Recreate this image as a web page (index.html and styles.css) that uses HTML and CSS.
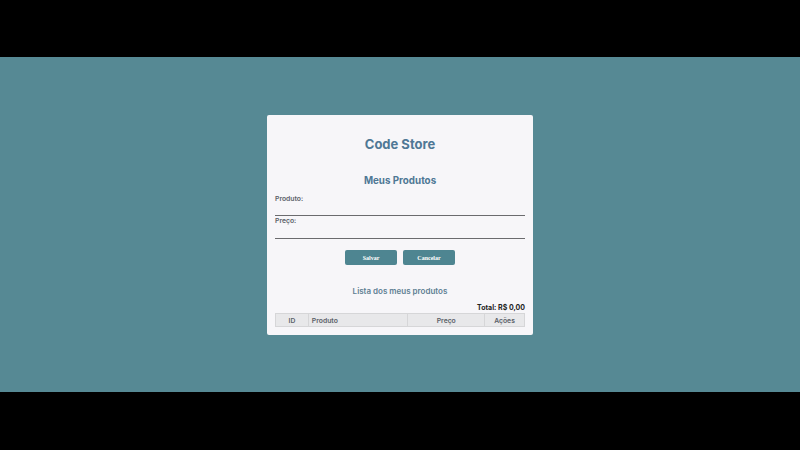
FILE: index.html
```html
<!DOCTYPE html>
<html lang="pt-BR">
<head>
<meta charset="utf-8">
<title>Code Store</title>
<link rel="stylesheet" href="styles.css">
</head>
<body>
<div class="stage">
  <main class="card">
    <h1 class="title">Code Store</h1>
    <h2 class="subtitle">Meus Produtos</h2>
    <form class="form">
      <label class="field">
        <span class="label">Produto:</span>
        <span class="input"></span>
      </label>
      <label class="field">
        <span class="label">Preço:</span>
        <span class="input"></span>
      </label>
      <div class="actions">
        <button type="button" class="btn">Salvar</button>
        <button type="button" class="btn">Cancelar</button>
      </div>
    </form>
    <h3 class="list-title">Lista dos meus produtos</h3>
    <div class="total">Total: R$ 0,00</div>
    <table class="table">
      <thead>
        <tr>
          <th class="c-id">ID</th>
          <th class="c-prod">Produto</th>
          <th class="c-price">Preço</th>
          <th class="c-act">Ações</th>
        </tr>
      </thead>
    </table>
  </main>
</div>
</body>
</html>
```
FILE: styles.css
```css
* { box-sizing: border-box; }
html, body {
  margin: 0;
  padding: 0;
  background: #000;
  height: 450px;
  overflow: hidden;
  font-family: Inter, "Liberation Sans", sans-serif;
}
.stage {
  margin-top: 57px;
  height: 335px;
  background: #568994;
  display: flex;
  justify-content: center;
  align-items: flex-start;
  padding-top: 58px;
}
.card {
  width: 266px;
  height: 220px;
  background: #f7f6f9;
  border-radius: 2px;
  padding: 0 8px 0 8px;
  display: flex;
  flex-direction: column;
}
.title {
  margin: 20px 0 0;
  text-align: center;
  font-size: 13px;
  font-weight: 700;
  color: #4f7895;
  line-height: 18px;
}
.subtitle {
  margin: 21px 0 0;
  text-align: center;
  font-size: 9.8px;
  font-weight: 700;
  color: #4f7895;
  line-height: 14px;
}
.form { display: flex; flex-direction: column; }
.field { display: flex; flex-direction: column; }
.label {
  font-size: 6.8px;
  font-weight: 600;
  color: #5a6068;
  line-height: 9px;
}
.form .field:first-child .label { margin-top: 6px; }
.input {
  display: block;
  height: 13px;
  border-bottom: 1px solid #6b6b6e;
}
.form .field + .field .label { margin-top: 0; }
.form .field + .field .input { height: 14px; }
.actions {
  display: flex;
  justify-content: center;
  gap: 6px;
  margin-top: 11px;
}
.btn {
  width: 52px;
  height: 15px;
  border: none;
  border-radius: 2px;
  background: #4e8591;
  color: #fff;
  font-family: "Liberation Serif", serif;
  font-size: 6px;
  font-weight: 700;
  padding: 0;
}
.list-title {
  margin: 20px 0 0;
  text-align: center;
  font-size: 8px;
  font-weight: 600;
  color: #5e7f93;
  line-height: 12px;
}
.total {
  margin-top: 6px;
  text-align: right;
  font-size: 7px;
  font-weight: 700;
  color: #222;
  line-height: 10px;
}
.table {
  width: 250px;
  border-collapse: collapse;
  margin-top: 0;
}
.table th {
  background: #e8e8ea;
  border: 1px solid #d6d6d8;
  height: 13px;
  padding: 0 3px;
  font-size: 6.8px;
  font-weight: 600;
  color: #5a6068;
}
.c-id { width: 33px; text-align: center; }
.c-prod { width: 100px; text-align: left; }
.c-price { width: 77px; text-align: center; }
.c-act { width: 40px; text-align: center; }
```
